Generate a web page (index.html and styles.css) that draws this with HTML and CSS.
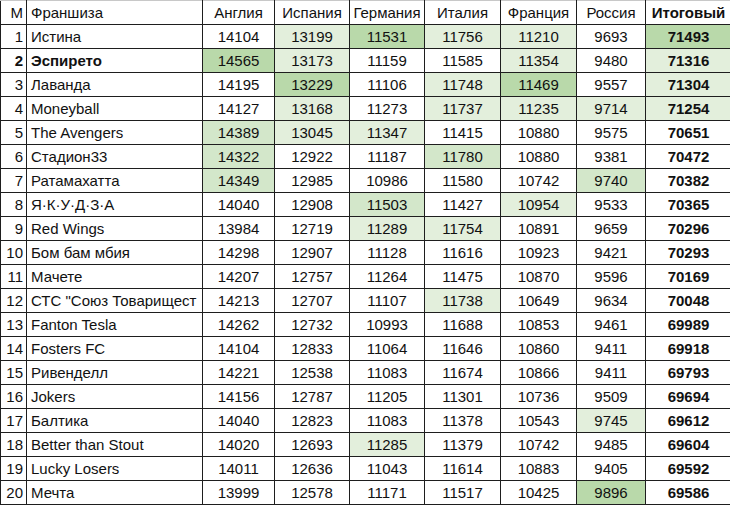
FILE: index.html
```html
<!DOCTYPE html>
<html lang="ru">
<head>
<meta charset="utf-8">
<title>Франшиза</title>
<link rel="stylesheet" href="styles.css">
</head>
<body>
<table class="sheet">
<colgroup>
<col class="c-num"><col class="c-name"><col class="c-en"><col class="c-es"><col class="c-de"><col class="c-it"><col class="c-fr"><col class="c-ru"><col class="c-tot">
</colgroup>
<thead>
<tr><th class="num">М</th><th class="name">Франшиза</th><th>Англия</th><th>Испания</th><th>Германия</th><th>Италия</th><th>Франция</th><th>Россия</th><th class="bold">Итоговый</th></tr>
</thead>
<tbody>
<tr><td class="num">1</td><td class="name">Истина</td><td>14104</td><td class="g1">13199</td><td class="g3">11531</td><td class="g1">11756</td><td class="g1">11210</td><td>9693</td><td class="tot g3">71493</td></tr>
<tr class="bold"><td class="num">2</td><td class="name">Эспирето</td><td class="g3 reg">14565</td><td class="g1 reg">13173</td><td class="reg">11159</td><td class="reg">11585</td><td class="g1 reg">11354</td><td class="reg">9480</td><td class="tot g1">71316</td></tr>
<tr><td class="num">3</td><td class="name">Лаванда</td><td>14195</td><td class="g3">13229</td><td>11106</td><td class="g1">11748</td><td class="g3">11469</td><td>9557</td><td class="tot g1">71304</td></tr>
<tr><td class="num">4</td><td class="name">Moneyball</td><td>14127</td><td class="g1">13168</td><td>11273</td><td class="g1">11737</td><td class="g1">11235</td><td class="g1">9714</td><td class="tot g1">71254</td></tr>
<tr><td class="num">5</td><td class="name">The Avengers</td><td class="g2">14389</td><td class="g1">13045</td><td class="g1">11347</td><td>11415</td><td>10880</td><td>9575</td><td class="tot">70651</td></tr>
<tr><td class="num">6</td><td class="name">Стадион33</td><td class="g2">14322</td><td>12922</td><td>11187</td><td class="g2">11780</td><td>10880</td><td>9381</td><td class="tot">70472</td></tr>
<tr><td class="num">7</td><td class="name">Ратамахатта</td><td class="g2">14349</td><td>12985</td><td>10986</td><td>11580</td><td>10742</td><td class="g2">9740</td><td class="tot">70382</td></tr>
<tr><td class="num">8</td><td class="name">Я·К·У·Д·З·А</td><td>14040</td><td>12908</td><td class="g2">11503</td><td>11427</td><td class="g1">10954</td><td>9533</td><td class="tot">70365</td></tr>
<tr><td class="num">9</td><td class="name">Red Wings</td><td>13984</td><td>12719</td><td class="g1">11289</td><td class="g1">11754</td><td>10891</td><td>9659</td><td class="tot">70296</td></tr>
<tr><td class="num">10</td><td class="name">Бом бам мбия</td><td>14298</td><td>12907</td><td>11128</td><td>11616</td><td>10923</td><td>9421</td><td class="tot">70293</td></tr>
<tr><td class="num">11</td><td class="name">Мачете</td><td>14207</td><td>12757</td><td>11264</td><td>11475</td><td>10870</td><td>9596</td><td class="tot">70169</td></tr>
<tr><td class="num">12</td><td class="name">СТС "Союз Товарищест</td><td>14213</td><td>12707</td><td>11107</td><td class="g1">11738</td><td>10649</td><td>9634</td><td class="tot">70048</td></tr>
<tr><td class="num">13</td><td class="name">Fanton Tesla</td><td>14262</td><td>12732</td><td>10993</td><td>11688</td><td>10853</td><td>9461</td><td class="tot">69989</td></tr>
<tr><td class="num">14</td><td class="name">Fosters FC</td><td>14104</td><td>12833</td><td>11064</td><td>11646</td><td>10860</td><td>9411</td><td class="tot">69918</td></tr>
<tr><td class="num">15</td><td class="name">Ривенделл</td><td>14221</td><td>12538</td><td>11083</td><td>11674</td><td>10866</td><td>9411</td><td class="tot">69793</td></tr>
<tr><td class="num">16</td><td class="name">Jokers</td><td>14156</td><td>12787</td><td>11205</td><td>11301</td><td>10736</td><td>9509</td><td class="tot">69694</td></tr>
<tr><td class="num">17</td><td class="name">Балтика</td><td>14040</td><td>12823</td><td>11083</td><td>11378</td><td>10543</td><td class="g1">9745</td><td class="tot">69612</td></tr>
<tr><td class="num">18</td><td class="name">Better than Stout</td><td>14020</td><td>12693</td><td class="g1">11285</td><td>11379</td><td>10742</td><td>9485</td><td class="tot">69604</td></tr>
<tr><td class="num">19</td><td class="name">Lucky Losers</td><td>14011</td><td>12636</td><td>11043</td><td>11614</td><td>10883</td><td>9405</td><td class="tot">69592</td></tr>
<tr><td class="num">20</td><td class="name">Мечта</td><td>13999</td><td>12578</td><td>11171</td><td>11517</td><td>10425</td><td class="g3">9896</td><td class="tot">69586</td></tr>
</tbody>
</table>
</body>
</html>
```
FILE: styles.css
```css
html, body {
  margin: 0;
  padding: 0;
  background: #ffffff;
}
body {
  font-family: "Liberation Sans", Arial, sans-serif;
  font-size: 15px;
  color: #111;
}
.sheet {
  border-collapse: collapse;
  table-layout: fixed;
  width: 731px;
  border-top: 1px solid #c8c8c8;
  border-left: 1px solid #c8c8c8;
}
.c-num { width: 26px; }
.c-name { width: 176px; }
.c-en { width: 72px; }
.c-es { width: 75px; }
.c-de { width: 75px; }
.c-it { width: 76px; }
.c-fr { width: 76px; }
.c-ru { width: 69px; }
.c-tot { width: 86px; }
.sheet th, .sheet td {
  height: 23px;
  padding: 0 3px;
  border: 1px solid #1e1e1e;
  text-align: center;
  white-space: nowrap;
  overflow: hidden;
  font-weight: normal;
  line-height: 22px;
}
.sheet thead th {
  border-top-color: #c8c8c8;
}
.sheet .num { text-align: right; padding-right: 3px; padding-left: 0; }
.sheet .name { text-align: left; padding-left: 4px; padding-right: 0; text-overflow: clip; }
.sheet .bold, .bold td { font-weight: bold; }
.bold td.reg { font-weight: normal; }
.sheet .tot { font-weight: bold; }
.g1 { background: #e3efdc; }
.g2 { background: #d3e7ca; }
.g3 { background: #b9d9aa; }
```
